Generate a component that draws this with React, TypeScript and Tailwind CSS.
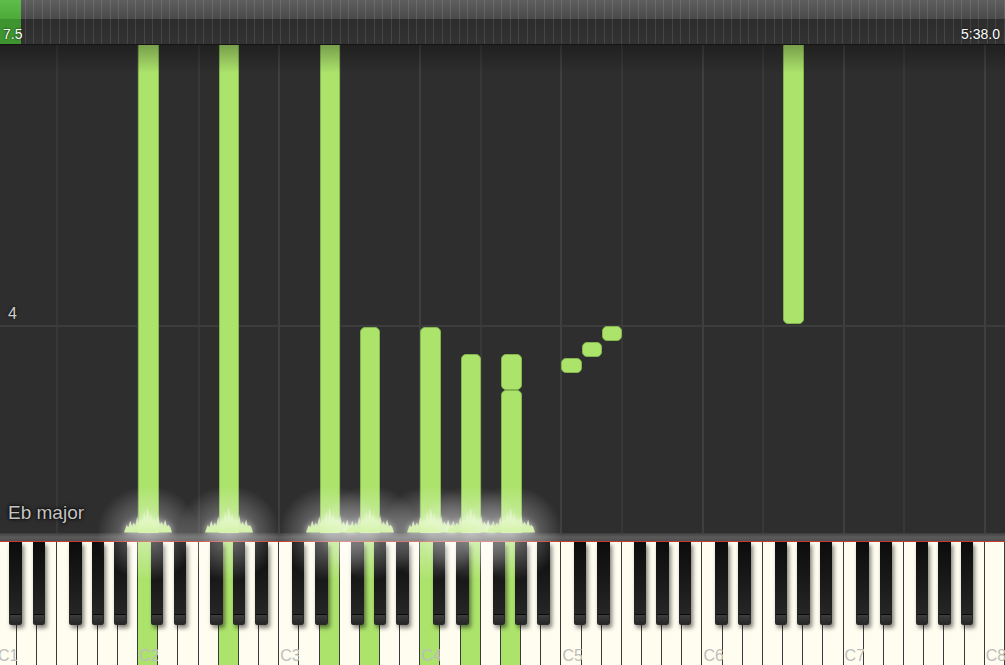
import React from 'react'

const WK = 20.16
const OFF = -3
const ROLL_H = 488
const wx = (i: number) => OFF + i * WK

type Note = { k: number; top: number; bottom: number }

const notes: Note[] = [
  { k: 7, top: -6, bottom: ROLL_H + 6 },
  { k: 11, top: -6, bottom: ROLL_H + 6 },
  { k: 16, top: -6, bottom: ROLL_H + 6 },
  { k: 18, top: 282, bottom: ROLL_H + 6 },
  { k: 21, top: 282, bottom: ROLL_H + 6 },
  { k: 23, top: 309, bottom: ROLL_H + 6 },
  { k: 25, top: 309, bottom: 345 },
  { k: 25, top: 345, bottom: ROLL_H + 6 },
  { k: 28, top: 313, bottom: 328 },
  { k: 29, top: 297, bottom: 312 },
  { k: 30, top: 281, bottom: 296 },
  { k: 39, top: -6, bottom: 279 },
]

const pressed = [7, 11, 16, 18, 21, 23, 25]

// black keys sit after C, D, F, G, A (white index within octave) with a small offset
const blackOffsets: Record<number, number> = { 0: -1.5, 1: 1.8, 3: -2.2, 4: 0, 5: 2.4 }

const sparkPoints = (() => {
  const hs = [7, 11, 9, 15, 12, 19, 23, 17, 13, 16, 10, 12, 7]
  const pts: string[] = ['0,24']
  hs.forEach((h, s) => {
    const x = 2.5 + s * 3.2
    const mid = 1 - Math.abs(s - 6) / 7
    pts.push(`${x.toFixed(1)},${24 - h}`)
    pts.push(`${(x + 1.6).toFixed(1)},${(24 - 4 - mid * 6).toFixed(1)}`)
  })
  pts.push('44,24')
  return pts.join(' ')
})()

function Timeline() {
  const ticks = Array.from({ length: 118 })
  return (
    <div className="relative h-[45px] shrink-0 border-b border-[#151515]">
      <div className="h-[19px] bg-gradient-to-b from-[#5e5e5e] to-[#4a4a4a]" />
      <div className="h-[25px] bg-gradient-to-b from-[#2c2c2c] to-[#333333]" />
      <div className="absolute inset-0 flex">
        {ticks.map((_, i) => (
          <div key={i} className="flex-1 border-r border-white/10" />
        ))}
      </div>
      <div className="absolute left-0 top-0 bottom-0 w-[21px] flex flex-col">
        <div className="h-[19px] bg-gradient-to-b from-[#5fbd4a] to-[#4caa3a]" />
        <div className="flex-1 bg-[#3e952f]" />
      </div>
      <span className="absolute left-[3px] top-[26px] text-[14px] leading-[16px] text-white [text-shadow:0_0_2px_#000]">
        7.5
      </span>
      <span className="absolute right-[5px] top-[26px] text-[14px] leading-[16px] text-white [text-shadow:0_0_2px_#000]">
        5:38.0
      </span>
    </div>
  )
}

function Roll() {
  const lines: { x: number; c: boolean }[] = []
  for (let o = 0; o <= 7; o++) {
    lines.push({ x: wx(o * 7), c: true })
    if (o < 7) lines.push({ x: wx(o * 7 + 3), c: false })
  }
  return (
    <div className="relative h-[488px] shrink-0 overflow-hidden bg-[#2e2e2e]">
      {lines.map((l, i) => (
        <div
          key={i}
          className={`absolute top-0 bottom-0 w-[2px] ${l.c ? 'bg-[#3f3f3f]' : 'bg-[#383838]'}`}
          style={{ left: l.x - 1 }}
        />
      ))}
      <div className="absolute left-0 right-0 top-[280px] h-[2px] bg-[#3c3c3c]" />
      <span className="absolute left-[8px] top-[257px] text-[16px] text-[#cfcfcf] [text-shadow:0_0_3px_#000]">
        4
      </span>
      {notes.map((n, i) => (
        <div
          key={i}
          className="absolute rounded-[5px] border border-[#84b54f] bg-[#ace36b]"
          style={{ left: wx(n.k), width: 20.5, top: n.top, height: n.bottom - n.top }}
        />
      ))}
      <div className="absolute left-0 right-0 top-0 h-[28px] bg-gradient-to-b from-black/30 to-transparent" />
      <span className="absolute left-[8px] bottom-[6px] text-[19px] text-[#c4c4c4] [text-shadow:0_0_4px_#000,0_0_2px_#000]">
        Eb major
      </span>
    </div>
  )
}

function Keyboard() {
  const whites = Array.from({ length: 50 })
  const blacks: { x: number }[] = []
  for (let i = 0; i < 49; i++) {
    const w = i % 7
    if (w in blackOffsets) blacks.push({ x: wx(i + 1) + blackOffsets[w] - 6.25 })
  }
  return (
    <div className="relative h-[123px] shrink-0 overflow-hidden bg-[#fffdef]">
      <div className="flex h-full w-[1008px] -ml-[3px]">
        {whites.map((_, i) => (
          <div
            key={i}
            className={`relative flex-1 border-r border-[#3a3a3a] ${pressed.includes(i) ? 'bg-[#ace36b]' : 'bg-[#fffdef]'}`}
          >
            {i % 7 === 0 && (
              <span className="absolute left-[1px] top-[105px] text-[16px] leading-[18px] text-[#bdbdbd]">
                C{i / 7 + 1}
              </span>
            )}
          </div>
        ))}
      </div>
      {blacks.map((b, i) => (
        <div
          key={i}
          className="absolute top-0 h-[83px] w-[12.5px] flex flex-col rounded-b-[2px] bg-gradient-to-b from-[#0c0c0c] via-[#1a1a1a] to-[#2a2a2a] shadow-[2px_3px_4px_rgba(0,0,0,0.5)]"
          style={{ left: b.x }}
        >
          <div className="flex-1" />
          <div className="h-[10px] mx-[1px] mb-[1px] rounded-b-[1px] border-t border-[#0a0a0a] bg-gradient-to-b from-[#3d3d3d] to-[#262626]" />
        </div>
      ))}
    </div>
  )
}

export default function App() {
  return (
    <div className="relative flex h-[665px] w-[1005px] flex-col overflow-hidden bg-[#2e2e2e] [font-family:'Liberation_Sans',sans-serif]">
      <Timeline />
      <Roll />
      <div className="h-[8px] shrink-0 bg-gradient-to-b from-[#3e3e3e] via-[#5a5a5a] to-[#505050]" />
      <div className="h-px shrink-0 bg-[#c23a32]" />
      <Keyboard />

      {/* glow where notes hit the keyboard */}
      {pressed.map((k) => {
        const cx = wx(k) + 10.25
        return (
          <React.Fragment key={k}>
            <div
              className="pointer-events-none absolute h-[96px] w-[104px] bg-[radial-gradient(ellipse_at_center,rgba(255,255,255,0.45)_0%,rgba(255,255,255,0.2)_40%,rgba(255,255,255,0)_70%)]"
              style={{ left: cx - 52, top: 533 - 48 }}
            />
            <svg
              className="pointer-events-none absolute [filter:drop-shadow(0_0_3px_rgba(255,255,255,0.7))]"
              width={48}
              height={27}
              viewBox="0 0 44 24"
              style={{ left: cx - 24, top: 533 - 27 }}
            >
              <defs>
                <linearGradient id={`sp${k}`} x1="0" y1="0" x2="0" y2="1">
                  <stop offset="0" stopColor="#eefbdc" stopOpacity="0.75" />
                  <stop offset="1" stopColor="#d4f3a8" />
                </linearGradient>
              </defs>
              <polygon points={sparkPoints} fill={`url(#sp${k})`} />
            </svg>
          </React.Fragment>
        )
      })}
    </div>
  )
}
